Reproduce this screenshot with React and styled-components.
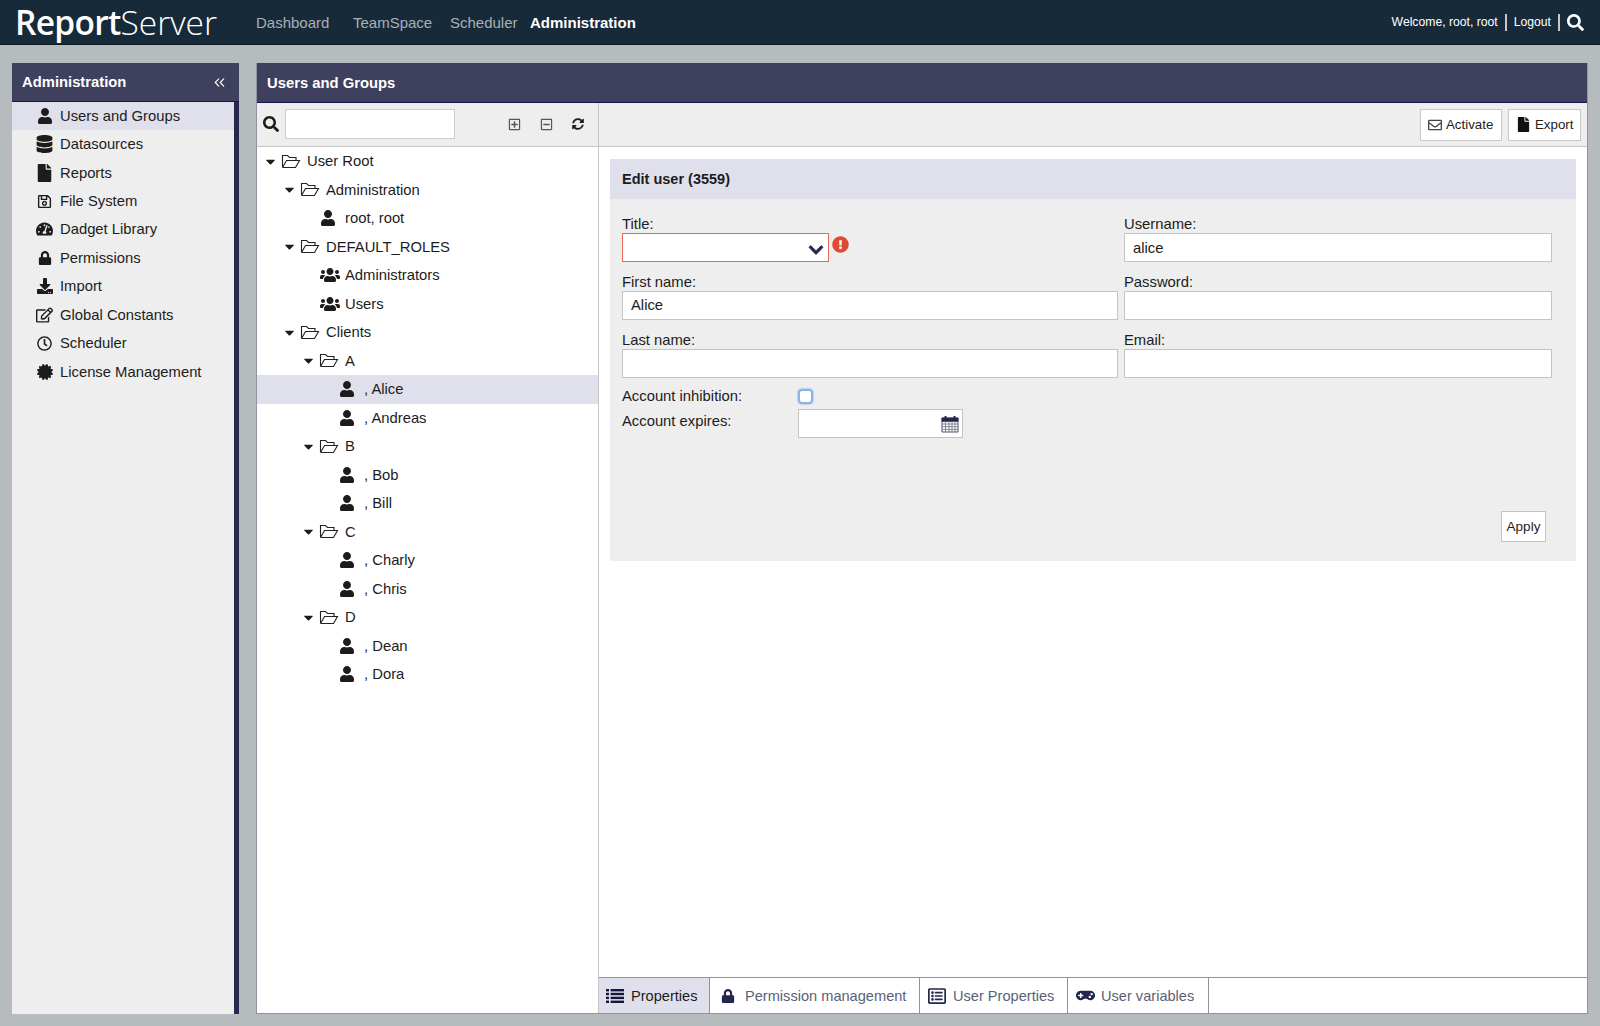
import React from "react";
import styled, { createGlobalStyle } from "styled-components";
import {
  FaUser,
  FaUsers,
  FaDatabase,
  FaFile,
  FaRegSave,
  FaTachometerAlt,
  FaLock,
  FaDownload,
  FaRegEdit,
  FaRegClock,
  FaCertificate,
  FaSearch,
  FaRegPlusSquare,
  FaRegMinusSquare,
  FaSyncAlt,
  FaRegEnvelope,
  FaExclamationCircle,
  FaChevronDown,
  FaRegListAlt,
  FaGamepad,
  FaCaretDown,
} from "react-icons/fa";
import { ChevronsLeft } from "lucide-react";

const GlobalStyle = createGlobalStyle`
  html, body {
    margin: 0;
    height: 100%;
    overflow: hidden;
  }
  body {
    background: #b6bbbd;
    font-family: "Liberation Sans", Arial, sans-serif;
    font-size: 14.8px;
    color: #1c1c1c;
  }
  * {
    box-sizing: border-box;
  }
`;

function OpenFolder() {
  return (
    <svg width="20" height="15" viewBox="0 0 20 15" fill="none" stroke="#222" strokeWidth="1.1">
      <path d="M1.5 13.5V1.5h5l2 2h6.5v3M1.5 13.5h13l4-7H5.5l-4 7" />
    </svg>
  );
}

function ListIcon() {
  return (
    <svg width="18" height="14" viewBox="0 0 18 14" fill="#15173a">
      <rect x="0" y="0" width="3" height="2.4" />
      <rect x="4.6" y="0" width="13.4" height="2.4" />
      <rect x="0" y="3.8" width="3" height="2.4" />
      <rect x="4.6" y="3.8" width="13.4" height="2.4" />
      <rect x="0" y="7.7" width="3" height="2.4" />
      <rect x="4.6" y="7.7" width="13.4" height="2.4" />
      <rect x="0" y="11.6" width="3" height="2.4" />
      <rect x="4.6" y="11.6" width="13.4" height="2.4" />
    </svg>
  );
}

function CalendarIcon() {
  return (
    <svg width="18" height="18" viewBox="0 0 18 18" fill="none" stroke="#23264d" strokeWidth="0.8">
      <path d="M1 3h16v14H1z" fill="#fff" />
      <path d="M1 3h16v3.4H1z" fill="#23264d" />
      <path d="M4.5 1v4M13.5 1v4" strokeWidth="2" stroke="#23264d" />
      <path d="M1 9h16M1 11.7h16M1 14.4h16M4.5 6v11M8 6v11M11 6v11M14 6v11" stroke="#6b6e86" />
    </svg>
  );
}

const sideItems = [
  { label: "Users and Groups", icon: FaUser, size: 16, active: true },
  { label: "Datasources", icon: FaDatabase, size: 18 },
  { label: "Reports", icon: FaFile, size: 18 },
  { label: "File System", icon: FaRegSave, size: 15 },
  { label: "Dadget Library", icon: FaTachometerAlt, size: 18 },
  { label: "Permissions", icon: FaLock, size: 14 },
  { label: "Import", icon: FaDownload, size: 16 },
  { label: "Global Constants", icon: FaRegEdit, size: 18 },
  { label: "Scheduler", icon: FaRegClock, size: 15 },
  { label: "License Management", icon: FaCertificate, size: 16 },
];

const treeItems = [
  { label: "User Root", level: 0, type: "folder" },
  { label: "Administration", level: 1, type: "folder" },
  { label: "root, root", level: 2, type: "user" },
  { label: "DEFAULT_ROLES", level: 1, type: "folder" },
  { label: "Administrators", level: 2, type: "group" },
  { label: "Users", level: 2, type: "group" },
  { label: "Clients", level: 1, type: "folder" },
  { label: "A", level: 2, type: "folder" },
  { label: ", Alice", level: 3, type: "user", selected: true },
  { label: ", Andreas", level: 3, type: "user" },
  { label: "B", level: 2, type: "folder" },
  { label: ", Bob", level: 3, type: "user" },
  { label: ", Bill", level: 3, type: "user" },
  { label: "C", level: 2, type: "folder" },
  { label: ", Charly", level: 3, type: "user" },
  { label: ", Chris", level: 3, type: "user" },
  { label: "D", level: 2, type: "folder" },
  { label: ", Dean", level: 3, type: "user" },
  { label: ", Dora", level: 3, type: "user" },
];

const tabs = [
  { label: "Properties", icon: <ListIcon />, active: true, width: 111, pad: 7, gap: 7 },
  { label: "Permission management", icon: <FaLock size={14} color="#23264d" />, width: 210, pad: 11, gap: 10 },
  { label: "User Properties", icon: <FaRegListAlt size={18} color="#23264d" />, width: 148, pad: 8, gap: 7 },
  { label: "User variables", icon: <FaGamepad size={19} color="#23264d" />, width: 141, pad: 8, gap: 6 },
];

export default function App() {
  return (
    <>
      <GlobalStyle />
      <Page>
        <TopBar>
          <Logo>
            <b>Report</b>Server
          </Logo>
          <MainNav>
            <NavLink $w={97}>Dashboard</NavLink>
            <NavLink $w={97}>TeamSpace</NavLink>
            <NavLink $w={80}>Scheduler</NavLink>
            <NavLink $active>Administration</NavLink>
          </MainNav>
          <UserNav>
            <span>Welcome, root, root</span>
            <UserSep />
            <span>Logout</span>
            <UserSep />
            <FaSearch size={17} />
          </UserNav>
        </TopBar>
        <Content>
          <Sidebar>
            <PanelTitle $h={39}>
              Administration
              <ChevronsLeft size={17} strokeWidth={1.6} />
            </PanelTitle>
            <SideBody>
              <SideList>
                {sideItems.map((item) => (
                  <SideRow key={item.label} $active={item.active}>
                    <SideIcon>
                      <item.icon size={item.size} />
                    </SideIcon>
                    {item.label}
                  </SideRow>
                ))}
              </SideList>
            </SideBody>
          </Sidebar>
          <MainPanel>
            <PanelTitle $h={40}>Users and Groups</PanelTitle>
            <Split>
              <TreeColumn>
                <TreeBar>
                  <FaSearch size={16} />
                  <TreeSearch />
                  <TreeTools>
                    <FaRegPlusSquare size={13} color="#555" />
                    <FaRegMinusSquare size={13} color="#555" />
                    <FaSyncAlt size={12} />
                  </TreeTools>
                </TreeBar>
                <Tree>
                  {treeItems.map((item) => (
                    <TreeRow key={item.label} $level={item.level} $selected={item.selected}>
                      {item.type === "folder" ? (
                        <>
                          <Caret>
                            <FaCaretDown size={15} />
                          </Caret>
                          <OpenFolder />
                        </>
                      ) : (
                        <LeafIcon>
                          {item.type === "user" ? <FaUser size={16} /> : <FaUsers size={20} />}
                        </LeafIcon>
                      )}
                      <TreeLabel $leaf={item.type !== "folder"}>{item.label}</TreeLabel>
                    </TreeRow>
                  ))}
                </Tree>
              </TreeColumn>
              <DetailColumn>
                <DetailBar>
                  <ToolButton $w={82}>
                    <FaRegEnvelope size={14} color="#444" />
                    Activate
                  </ToolButton>
                  <ToolButton $w={73}>
                    <FaFile size={15} color="#111" />
                    Export
                  </ToolButton>
                </DetailBar>
                <DetailBody>
                  <FormPanel>
                    <FormHead>Edit user (3559)</FormHead>
                    <FormBody>
                      <FieldGrid>
                        <Field>
                          <label>Title:</label>
                          <SelectLine>
                            <SelectBox>
                              <FaChevronDown size={16} color="#23264d" stroke="#23264d" strokeWidth={30} />
                            </SelectBox>
                            <ErrorMark>
                              <FaExclamationCircle size={17} color="#df4a32" />
                            </ErrorMark>
                          </SelectLine>
                        </Field>
                        <Field>
                          <label>Username:</label>
                          <TextBox>alice</TextBox>
                        </Field>
                        <Field>
                          <label>First name:</label>
                          <TextBox>Alice</TextBox>
                        </Field>
                        <Field>
                          <label>Password:</label>
                          <TextBox />
                        </Field>
                        <Field>
                          <label>Last name:</label>
                          <TextBox />
                        </Field>
                        <Field>
                          <label>Email:</label>
                          <TextBox />
                        </Field>
                      </FieldGrid>
                      <CheckRow>
                        <InlineLabel>Account inhibition:</InlineLabel>
                        <CheckBox />
                      </CheckRow>
                      <DateRow>
                        <InlineLabel>Account expires:</InlineLabel>
                        <DateBox>
                          <CalendarIcon />
                        </DateBox>
                      </DateRow>
                      <ApplyRow>
                        <ApplyButton>Apply</ApplyButton>
                      </ApplyRow>
                    </FormBody>
                  </FormPanel>
                </DetailBody>
                <TabBar>
                  {tabs.map((tab) => (
                    <Tab key={tab.label} $active={tab.active} $w={tab.width} $pad={tab.pad} $gap={tab.gap}>
                      {tab.icon}
                      {tab.label}
                    </Tab>
                  ))}
                </TabBar>
              </DetailColumn>
            </Split>
          </MainPanel>
        </Content>
      </Page>
    </>
  );
}

const Page = styled.div`
  display: flex;
  flex-direction: column;
  height: 100vh;
`;

const TopBar = styled.header`
  display: flex;
  align-items: center;
  height: 45px;
  flex: none;
  padding: 0 16px;
  background: #172a3a;
  border-bottom: 1px solid #0e1a24;
  color: #fff;
`;

const Logo = styled.div`
  width: 241px;
  margin-left: -1px;
  font-family: "Open Sans", sans-serif;
  font-size: 33.5px;
  font-weight: 300;
  letter-spacing: 0;
  b {
    font-weight: 600;
    letter-spacing: -0.7px;
  }
`;

const MainNav = styled.nav`
  display: flex;
  align-items: center;
`;

const NavLink = styled.a`
  width: ${(p) => (p.$w ? `${p.$w}px` : "auto")};
  color: ${(p) => (p.$active ? "#fff" : "#a9b0b6")};
  font-weight: ${(p) => (p.$active ? "bold" : "normal")};
  font-size: 15px;
`;

const UserNav = styled.div`
  display: flex;
  align-items: center;
  gap: 7px;
  margin-left: auto;
  font-size: 12.2px;
  color: #fff;
`;

const UserSep = styled.i`
  width: 2px;
  height: 17px;
  background: #c4c8cc;
`;

const Content = styled.main`
  display: flex;
  flex: 1;
  min-height: 0;
  gap: 17px;
  padding: 18px 12px 12px 12px;
`;

const Sidebar = styled.aside`
  display: flex;
  flex-direction: column;
  width: 227px;
  flex: none;
`;

const PanelTitle = styled.div`
  display: flex;
  align-items: center;
  justify-content: space-between;
  height: ${(p) => p.$h}px;
  flex: none;
  padding: 0 11px 0 10px;
  background: #3f3f5e;
  border-bottom: 1px solid #14154a;
  color: #fff;
  font-weight: bold;
  font-size: 14.8px;
`;

const SideBody = styled.div`
  flex: 1;
  background: #eee;
  border-right: 5px solid #262850;
`;

const SideList = styled.ul`
  list-style: none;
  margin: 0;
  padding: 0;
`;

const SideRow = styled.li`
  display: flex;
  align-items: center;
  height: 28.45px;
  padding: 0 0 1px 24px;
  background: ${(p) => (p.$active ? "#e0e0ec" : "transparent")};
`;

const SideIcon = styled.span`
  display: flex;
  justify-content: center;
  width: 17px;
  margin-right: 7px;
`;

const MainPanel = styled.section`
  display: flex;
  flex-direction: column;
  flex: 1;
  min-width: 0;
  background: #fff;
  border: 1px solid #8f95a0;
  border-top: none;
`;

const Split = styled.div`
  display: flex;
  flex: 1;
  min-height: 0;
`;

const TreeColumn = styled.div`
  display: flex;
  flex-direction: column;
  width: 342px;
  flex: none;
  border-right: 1px solid #c6c6c6;
`;

const TreeBar = styled.div`
  display: flex;
  align-items: center;
  height: 44px;
  flex: none;
  padding: 0 6px 1px;
  gap: 6px;
  background: #eee;
  border-bottom: 1px solid #c6c6c6;
`;

const TreeSearch = styled.div`
  width: 170px;
  height: 30px;
  background: #fff;
  border: 1px solid #ccc;
`;

const TreeTools = styled.div`
  display: flex;
  align-items: center;
  gap: 19px;
  margin-left: auto;
  padding-right: 8px;
`;

const Tree = styled.div`
  flex: 1;
`;

const TreeRow = styled.div`
  display: flex;
  align-items: center;
  height: 28.5px;
  padding-left: ${(p) => 7 + p.$level * 19}px;
  background: ${(p) => (p.$selected ? "#e0e0ec" : "transparent")};
`;

const Caret = styled.span`
  display: flex;
  justify-content: center;
  width: 13px;
  margin-right: 4px;
`;

const LeafIcon = styled.span`
  display: flex;
  width: 21px;
  margin-left: 18px;
`;

const TreeLabel = styled.span`
  margin-left: ${(p) => (p.$leaf ? 4 : 6)}px;
  white-space: nowrap;
`;

const DetailColumn = styled.div`
  display: flex;
  flex-direction: column;
  flex: 1;
  min-width: 0;
`;

const DetailBar = styled.div`
  display: flex;
  align-items: center;
  justify-content: flex-end;
  gap: 6px;
  height: 44px;
  flex: none;
  padding: 0 6px;
  background: #eee;
  border-bottom: 1px solid #c6c6c6;
`;

const ToolButton = styled.button`
  display: flex;
  align-items: center;
  gap: 4px;
  width: ${(p) => p.$w}px;
  height: 32px;
  padding: 0 0 0 7px;
  background: #fff;
  border: 1px solid #c9c9c9;
  font: inherit;
  font-size: 13.3px;
  color: #222;
`;

const DetailBody = styled.div`
  flex: 1;
  min-height: 0;
  padding: 12px 11px 0 11px;
`;

const FormPanel = styled.div`
  display: flex;
  flex-direction: column;
`;

const FormHead = styled.div`
  display: flex;
  align-items: center;
  height: 40px;
  padding-left: 12px;
  background: #e0e0ec;
  font-weight: bold;
  font-size: 14.5px;
`;

const FormBody = styled.div`
  display: flex;
  flex-direction: column;
  height: 362px;
  padding: 17px 30px 0 12px;
  background: #eee;
`;

const FieldGrid = styled.div`
  display: grid;
  grid-template-columns: 496px 428px;
  column-gap: 6px;
`;

const Field = styled.div`
  display: flex;
  flex-direction: column;
  height: 57.8px;
  label {
    line-height: 17px;
  }
`;

const SelectLine = styled.div`
  display: flex;
  align-items: flex-start;
  gap: 3px;
`;

const SelectBox = styled.div`
  display: flex;
  align-items: center;
  justify-content: flex-end;
  width: 207px;
  height: 29px;
  padding: 4px 4px 0 0;
  background: #fff;
  border: 1px solid #e8665a;
`;

const ErrorMark = styled.span`
  display: flex;
  margin-top: 3px;
`;

const TextBox = styled.div`
  display: flex;
  align-items: center;
  height: 29px;
  padding-left: 8px;
  background: #fff;
  border: 1px solid #c4c4c4;
`;

const CheckRow = styled.div`
  display: flex;
  align-items: center;
  height: 17px;
  margin-top: -1px;
`;

const DateRow = styled.div`
  display: flex;
  align-items: flex-start;
  margin-top: 4px;
`;

const InlineLabel = styled.span`
  width: 176px;
  line-height: 25px;
`;

const CheckBox = styled.span`
  width: 15px;
  height: 15px;
  background: #fff;
  border: 2px solid #88b4e8;
  border-radius: 4px;
  box-shadow: 0 0 1px 1px rgba(136, 180, 232, 0.45);
`;

const DateBox = styled.div`
  display: flex;
  align-items: center;
  justify-content: flex-end;
  width: 165px;
  height: 29px;
  padding-right: 3px;
  background: #fff;
  border: 1px solid #c4c4c4;
`;

const ApplyRow = styled.div`
  display: flex;
  justify-content: flex-end;
  margin-top: 73px;
`;

const ApplyButton = styled.button`
  width: 45px;
  height: 31px;
  padding: 0;
  background: #fff;
  border: 1px solid #c4c4c4;
  font: inherit;
  font-size: 13.5px;
  color: #222;
`;

const TabBar = styled.div`
  display: flex;
  height: 36px;
  flex: none;
  border-top: 1px solid #8f95a0;
`;

const Tab = styled.div`
  display: flex;
  align-items: center;
  gap: ${(p) => p.$gap}px;
  width: ${(p) => p.$w}px;
  padding-left: ${(p) => p.$pad}px;
  background: ${(p) => (p.$active ? "#e0e0ec" : "#fff")};
  border-right: 1px solid #8f95a0;
  color: ${(p) => (p.$active ? "#1c1c1c" : "#5a5f78")};
  font-size: 14.6px;
`;
